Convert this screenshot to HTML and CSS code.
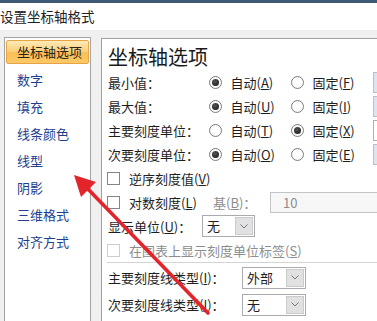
FILE: index.html
```html
<!DOCTYPE html>
<html lang="zh-CN">
<head>
<meta charset="utf-8">
<title>设置坐标轴格式</title>
<link rel="stylesheet" href="styles.css">
</head>
<body>
<div class="topline"></div>
<div class="titlebar">设置坐标轴格式</div>
<div class="main">
  <ul class="nav">
    <li class="sel">坐标轴选项</li>
    <li>数字</li>
    <li>填充</li>
    <li>线条颜色</li>
    <li>线型</li>
    <li>阴影</li>
    <li>三维格式</li>
    <li>对齐方式</li>
  </ul>
  <section class="panel">
    <h1>坐标轴选项</h1>
    <div class="row">
      <span class="lbl">最小值：</span>
      <span class="opt"><i class="radio on"></i>自动(<u>A</u>)</span>
      <span class="opt"><i class="radio"></i>固定(<u>F</u>)</span>
      <span class="field dis"></span>
    </div>
    <div class="row">
      <span class="lbl">最大值：</span>
      <span class="opt"><i class="radio on"></i>自动(<u>U</u>)</span>
      <span class="opt"><i class="radio"></i>固定(<u>I</u>)</span>
      <span class="field dis"></span>
    </div>
    <div class="row">
      <span class="lbl">主要刻度单位：</span>
      <span class="opt"><i class="radio"></i>自动(<u>T</u>)</span>
      <span class="opt"><i class="radio on"></i>固定(<u>X</u>)</span>
      <span class="field"></span>
    </div>
    <div class="row">
      <span class="lbl">次要刻度单位：</span>
      <span class="opt"><i class="radio on"></i>自动(<u>O</u>)</span>
      <span class="opt"><i class="radio"></i>固定(<u>E</u>)</span>
      <span class="field dis"></span>
    </div>
    <div class="row">
      <i class="check"></i><span>逆序刻度值(<u>V</u>)</span>
    </div>
    <div class="row">
      <i class="check"></i><span class="cklbl">对数刻度(<u>L</u>)</span>
      <span class="base">基(<u>B</u>)：</span>
      <span class="numbox">10</span>
    </div>
    <div class="row">
      <span class="lbl2">显示单位(<u>U</u>)：</span>
      <span class="select s1"><span class="val">无</span><span class="btn"><svg width="8" height="5" viewBox="0 0 8 5"><path d="M0.5 0.5 L4 4 L7.5 0.5" fill="none" stroke="#777" stroke-width="1"/></svg></span></span>
    </div>
    <div class="row muted">
      <i class="check dis"></i><span>在图表上显示刻度单位标签(<u>S</u>)</span>
    </div>
    <div class="sep"></div>
    <div class="row tall">
      <span class="lbl3">主要刻度线类型(<u>I</u>)：</span>
      <span class="select s2"><span class="val">外部</span><span class="btn"><svg width="8" height="5" viewBox="0 0 8 5"><path d="M0.5 0.5 L4 4 L7.5 0.5" fill="none" stroke="#777" stroke-width="1"/></svg></span></span>
    </div>
    <div class="row tall">
      <span class="lbl3">次要刻度线类型(<u>I</u>)：</span>
      <span class="select s2"><span class="val">无</span><span class="btn"><svg width="8" height="5" viewBox="0 0 8 5"><path d="M0.5 0.5 L4 4 L7.5 0.5" fill="none" stroke="#777" stroke-width="1"/></svg></span></span>
    </div>
    <div class="row tall">
      <span class="lbl3"></span>
      <span class="select s2"><span class="val"></span></span>
    </div>
  </section>
</div>
<svg class="arrow" width="377" height="321" viewBox="0 0 377 321">
  <line x1="208" y1="313" x2="86" y2="187" stroke="#e3252b" stroke-width="3.6" stroke-linecap="round"/>
  <polygon points="74,175 96,182 81,197" fill="#e3252b"/>
</svg>
</body>
</html>
```
FILE: styles.css
```css
* { box-sizing: border-box; margin: 0; padding: 0; }
html, body { width: 377px; height: 321px; overflow: hidden; }
body {
  background: #f0f0f0;
  font-family: "Noto Sans CJK SC", "Microsoft YaHei", sans-serif;
  font-size: 13px;
  color: #1e1e1e;
  position: relative;
}
.topline { height: 3px; background: #3f5a74; }
.titlebar {
  height: 27px;
  background: #fff;
  font-size: 13.5px;
  line-height: 27px;
  color: #222;
}
.main {
  display: flex;
  align-items: flex-start;
  width: 377px;
  height: 291px;
  overflow: hidden;
  padding: 7px 0 0 4px;
}
.nav {
  flex: none;
  width: 87px;
  height: 300px;
  background: #fff;
  border: 1px solid #a5a5a5;
  list-style: none;
}
.nav li {
  height: 27px;
  line-height: 27px;
  padding-left: 12px;
  color: #203f8f;
}
.nav li.sel {
  height: 24px;
  line-height: 22px;
  margin: 2px 1px 2px;
  padding-left: 10px;
  border: 1px solid #e6a445;
  border-radius: 2px;
  color: #2a2418;
  background: linear-gradient(#feeab8 0%, #fdd17e 45%, #fbbf55 55%, #fcc968 100%);
}
.panel {
  flex: none;
  width: 300px;
  height: 300px;
  margin: 1px 0 0 10px;
  background: #fff;
  border: 1px solid #a0a0a0;
  padding-left: 6px;
}
.panel h1 {
  font-size: 20px;
  font-weight: normal;
  line-height: 26px;
  margin-top: 5px;
  color: #1a1a1a;
}
.row { display: flex; align-items: center; height: 24px; white-space: nowrap; }
.row.tall { height: 27px; }
.lbl { flex: none; width: 100px; }
.opt { flex: none; width: 82px; display: flex; align-items: center; }
.opt + .opt { width: 83px; }
u { text-decoration: underline; }
.radio {
  flex: none;
  width: 13px; height: 13px;
  border: 1px solid #7d7d7d;
  border-radius: 50%;
  background: radial-gradient(circle, #fff 50%, #eaeaea 100%);
  margin: 0 9px 0 0.5px;
  position: relative;
}
.radio.on::after {
  content: "";
  position: absolute;
  left: 2px; top: 2px;
  width: 7px; height: 7px;
  border-radius: 50%;
  background: radial-gradient(circle at 40% 35%, #555, #111);
}
.field {
  flex: none;
  width: 30px; height: 21px;
  border: 1px solid #b8c0d0;
  background: #dfe5ef;
}
.field:not(.dis) { background: #fff; border-color: #b0b0b0; }
.check {
  flex: none;
  width: 13px; height: 13px;
  border: 1px solid #858585;
  background: #fff;
  margin: 0 9px 0 -1px;
}
.check.dis { border-color: #cdcdcd; }
.cklbl { flex: none; width: 84px; }
.base { flex: none; width: 57px; color: #8d8d8d; }
.numbox {
  flex: none;
  width: 120px; height: 21px;
  border: 1px solid #c4c4c4;
  background: #f7f7f7;
  color: #8d8d8d;
  padding-left: 12px;
  line-height: 19px;
}
.muted { color: #8d8d8d; }
.lbl2 { flex: none; width: 94px; }
.lbl3 { flex: none; width: 134px; }
.select {
  flex: none;
  display: flex;
  height: 22px;
  border: 1px solid #a9abb0;
  background: #fff;
}
.select.s1 { width: 53px; }
.select.s2 { width: 64px; }
.select .val { flex: 1; padding-left: 4px; line-height: 20px; }
.select .btn {
  flex: none;
  width: 18px;
  margin: 1px;
  background: #e1e1e1;
  border: 1px solid #cbcbcb;
  display: flex;
  align-items: center;
  justify-content: center;
}
.sep { height: 1px; background: #d4d4d4; margin: 0 0 1px -1px; }
.arrow { position: absolute; left: 0; top: 0; pointer-events: none; }
```
